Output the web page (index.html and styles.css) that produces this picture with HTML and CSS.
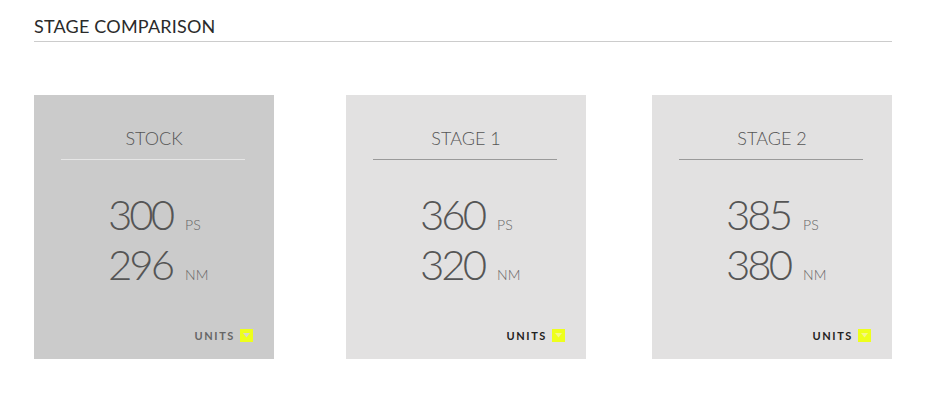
FILE: index.html
```html
<!DOCTYPE html>
<html>
<head>
<meta charset="utf-8">
<link rel="stylesheet" href="styles.css">
</head>
<body>
<div class="page">
  <h1 class="heading">STAGE COMPARISON</h1>
  <div class="cards">
    <div class="cell">
      <div class="card card-stock">
        <div class="card-title">STOCK</div>
        <div class="divider"></div>
        <div class="values">
          <div class="row"><span class="num">300</span><span class="unit">PS</span></div>
          <div class="row"><span class="num">296</span><span class="unit">NM</span></div>
        </div>
        <div class="units">
          <span class="units-label">UNITS</span>
          <span class="units-btn"><svg width="7" height="5" viewBox="0 0 7 5"><path d="M0 0H7L3.5 4.5Z" fill="#d8d8c8"/></svg></span>
        </div>
      </div>
    </div>
    <div class="cell">
      <div class="card">
        <div class="card-title">STAGE 1</div>
        <div class="divider"></div>
        <div class="values">
          <div class="row"><span class="num">360</span><span class="unit">PS</span></div>
          <div class="row"><span class="num">320</span><span class="unit">NM</span></div>
        </div>
        <div class="units">
          <span class="units-label">UNITS</span>
          <span class="units-btn"><svg width="7" height="5" viewBox="0 0 7 5"><path d="M0 0H7L3.5 4.5Z" fill="#f4f78a"/></svg></span>
        </div>
      </div>
    </div>
    <div class="cell">
      <div class="card">
        <div class="card-title">STAGE 2</div>
        <div class="divider"></div>
        <div class="values">
          <div class="row"><span class="num">385</span><span class="unit">PS</span></div>
          <div class="row"><span class="num">380</span><span class="unit">NM</span></div>
        </div>
        <div class="units">
          <span class="units-label">UNITS</span>
          <span class="units-btn"><svg width="7" height="5" viewBox="0 0 7 5"><path d="M0 0H7L3.5 4.5Z" fill="#f4f78a"/></svg></span>
        </div>
      </div>
    </div>
  </div>
</div>
</body>
</html>
```
FILE: styles.css
```css
html, body {
  margin: 0;
  padding: 0;
  background: #ffffff;
}
body {
  font-family: Lato, "Open Sans", sans-serif;
}
.page {
  padding: 15px 0 0 34px;
  width: 858px;
}
.heading {
  margin: 0;
  font-size: 18px;
  line-height: 22px;
  font-weight: 400;
  letter-spacing: 0.2px;
  color: #2a2a2a;
  padding-bottom: 4px;
  border-bottom: 1px solid #cccccc;
}
.cards {
  display: grid;
  grid-template-columns: 312px 306px 240px;
  margin-top: 53px;
}
.card {
  width: 240px;
  height: 264px;
  box-sizing: border-box;
  background: #e2e1e1;
  display: flex;
  flex-direction: column;
  padding-top: 32px;
}
.card-stock {
  background: #cbcbcb;
}
.card-title {
  text-align: center;
  font-size: 18px;
  line-height: 22px;
  font-weight: 300;
  color: #555;
}
.divider {
  margin: 10px 0 0 27px;
  width: 184px;
  height: 1px;
  background: #9a9a9a;
}
.card-stock .divider {
  background: #e6e6e6;
}
.values {
  margin-top: 29px;
  padding-left: 74px;
}
.row {
  line-height: 50px;
  height: 50px;
  white-space: nowrap;
}
.num {
  font-size: 42px;
  font-weight: 300;
  letter-spacing: -3px;
  color: #555;
}
.unit {
  font-size: 14px;
  font-weight: 300;
  color: #666;
  margin-left: 13px;
}
.units {
  margin-top: auto;
  padding: 0 21px 17px 0;
  display: flex;
  justify-content: flex-end;
  align-items: center;
  gap: 5px;
}
.units-label {
  font-size: 11px;
  font-weight: 700;
  letter-spacing: 1.6px;
  color: #222;
  line-height: 13px;
}
.card-stock .units-label {
  color: #666;
}
.units-btn {
  width: 13px;
  height: 13px;
  background: #eeff1c;
  display: flex;
  align-items: center;
  justify-content: center;
}
```
